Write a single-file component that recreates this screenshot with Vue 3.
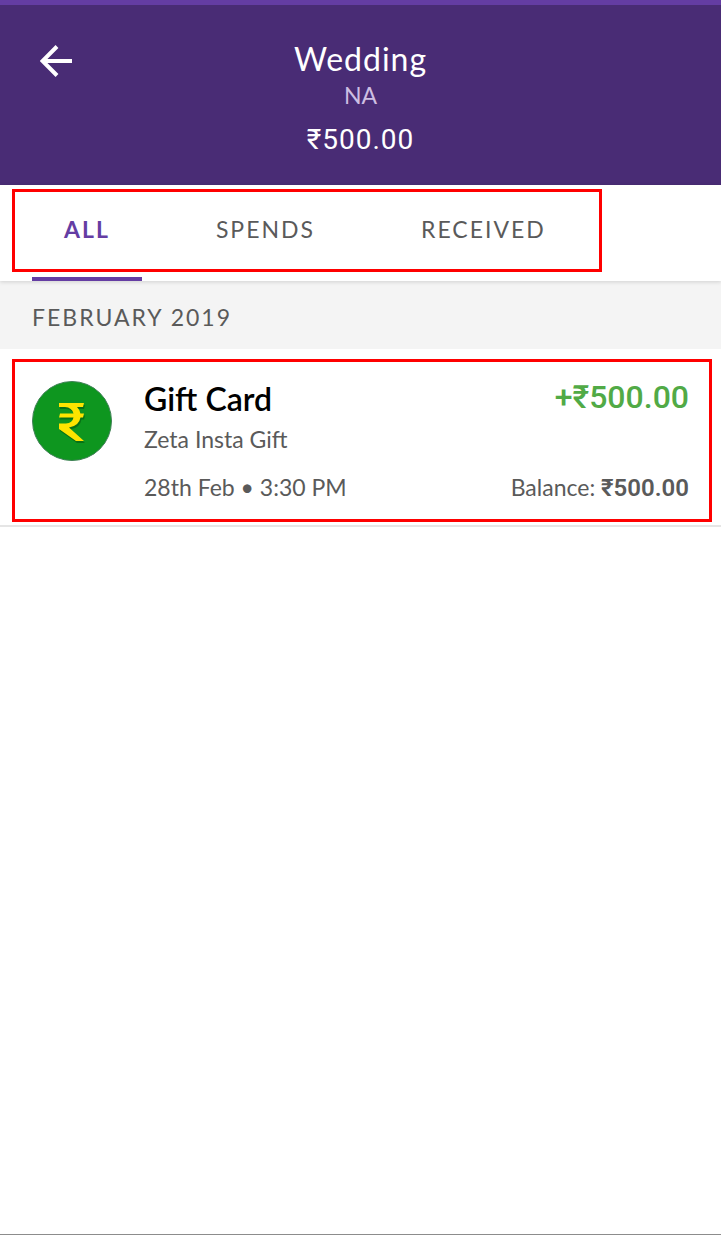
<script setup>
import { ref } from 'vue'

const tabs = ['ALL', 'SPENDS', 'RECEIVED']
const active = ref('ALL')
</script>

<template>
  <div class="screen">
    <header class="header">
      <button class="back" type="button" aria-label="Back">
        <svg viewBox="0 0 32 32" width="32" height="32" aria-hidden="true">
          <path d="M32 16H3M17 1.5L2.5 16L17 30.5" fill="none" stroke="#fff" stroke-width="4" />
        </svg>
      </button>
      <div class="heading">
        <h1 class="title">Wedding</h1>
        <p class="subtitle">NA</p>
        <p class="total">₹500.00</p>
      </div>
    </header>

    <nav class="tabs">
      <button
        v-for="tab in tabs"
        :key="tab"
        type="button"
        class="tab"
        :class="{ active: tab === active }"
        @click="active = tab"
      >{{ tab }}</button>
      <span class="mark mark-tabs"></span>
    </nav>

    <main class="content">
      <h2 class="month">FEBRUARY 2019</h2>
      <article class="entry">
        <svg class="coin" viewBox="0 0 80 80" width="80" height="80" aria-hidden="true">
          <defs>
            <path
              id="rupee"
              d="M27 22H52L51 26H45Q48 29 48.5 32.5H52L51 36.5H48.5Q47 45 37 46.5L52 60H44L27 48V42.5H34Q40.5 42 41.5 36.5H27L28 32.5H41.5Q40 26.5 33 26H27Z"
            />
          </defs>
          <circle cx="40" cy="40" r="39.5" fill="#0e961f" stroke="#3f8056" stroke-width="1" />
          <use href="#rupee" x="1" y="2" fill="#087016" />
          <use href="#rupee" fill="#fde400" />
        </svg>
        <div class="details">
          <div class="row">
            <h3 class="name">Gift Card</h3>
            <span class="amount">+₹500.00</span>
          </div>
          <p class="note">Zeta Insta Gift</p>
          <div class="row meta">
            <span>28th Feb • 3:30 PM</span>
            <span>Balance: <b class="balance">₹500.00</b></span>
          </div>
        </div>
        <span class="mark mark-entry"></span>
      </article>
    </main>
  </div>
</template>

<style>
body {
  margin: 0;
  background: #fff;
}
</style>

<style scoped>
.screen {
  box-sizing: border-box;
  min-height: calc(100vh - 1px);
  border-bottom: 1px solid #8c8c8c;
  background: #fff;
  color: #5a5a5a;
  font-family: Lato, "Liberation Sans", sans-serif;
  font-size: 23px;
}
h1, h2, h3, p {
  margin: 0;
  font-weight: 400;
}
button {
  border: 0;
  padding: 0;
  background: none;
  font: inherit;
  color: inherit;
  cursor: pointer;
}
.header {
  display: grid;
  grid-template-columns: 80px 1fr 80px;
  align-items: start;
  box-sizing: border-box;
  min-height: 185px;
  padding-top: 32px;
  border-top: 5px solid #643da3;
  background: #492c75;
  color: #fff;
}
.back {
  display: flex;
  margin: 8px 0 0 40px;
  width: 32px;
}
.heading {
  text-align: center;
}
.title {
  font-size: 32px;
  line-height: 44px;
  letter-spacing: 1px;
}
.subtitle {
  line-height: 28px;
  color: #cdbfe2;
}
.total {
  margin-top: 12px;
  font-family: Roboto, sans-serif;
  font-size: 28px;
  line-height: 38px;
  letter-spacing: 1px;
}
.tabs {
  position: relative;
  z-index: 1;
  display: flex;
  gap: 42px;
  padding: 0 32px;
  background: #fff;
  box-shadow: 0 1px 4px rgba(0, 0, 0, 0.15);
}
.tab {
  height: 96px;
  padding: 0 32px 4px;
  border-bottom: 4px solid transparent;
  letter-spacing: 2px;
}
.tab.active {
  border-bottom-color: #643da3;
  color: #643da3;
  font-weight: 700;
}
.month {
  padding: 4px 32px 0;
  background: #f4f4f4;
  font-size: 23px;
  line-height: 64px;
  letter-spacing: 2px;
}
.entry {
  position: relative;
  display: flex;
  gap: 32px;
  padding: 32px 32px 22px;
  border-bottom: 2px solid #e5e5e5;
}
.coin {
  flex: none;
}
.details {
  flex: 1;
}
.row {
  display: flex;
  justify-content: space-between;
}
.name {
  color: #000;
  font-size: 32px;
  font-weight: 600;
  line-height: 36px;
}
.amount {
  color: #51aa46;
  font-family: Roboto, sans-serif;
  font-size: 32px;
  font-weight: 500;
  line-height: 32px;
}
.note {
  font-size: 23px;
  line-height: 44px;
}
.meta {
  margin-top: 10px;
  line-height: 32px;
}
.balance {
  font-family: Roboto, sans-serif;
  font-weight: 600;
  font-size: 24px;
  line-height: 1;
}
.mark {
  position: absolute;
  box-sizing: border-box;
  border: 3px solid #f00;
  pointer-events: none;
}
.mark-tabs {
  top: 4px;
  left: 12px;
  width: 590px;
  height: 83px;
}
.mark-entry {
  inset: 10px 9px 3px 12px;
}
</style>
